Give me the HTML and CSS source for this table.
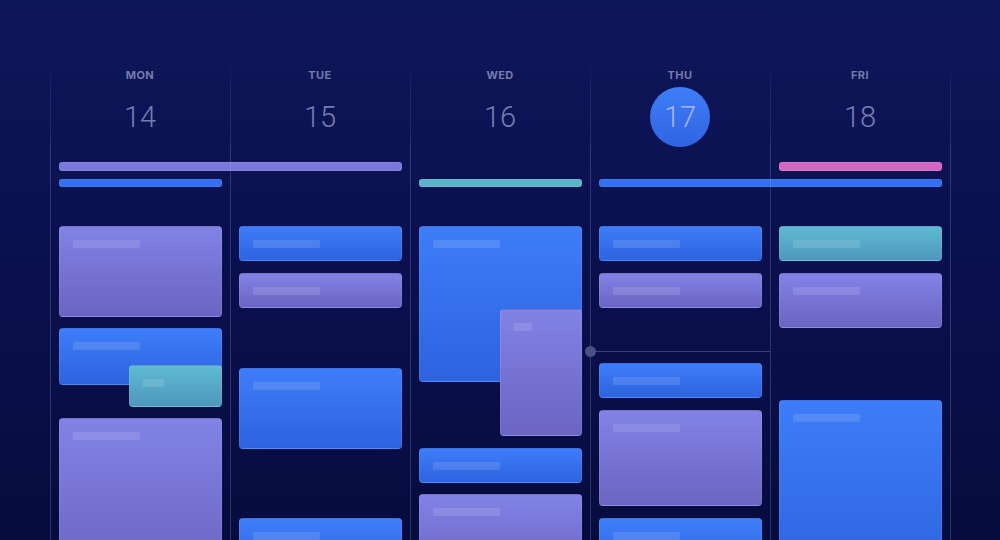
FILE: index.html
```html
<!DOCTYPE html>
<html>
<head>
<meta charset="utf-8">
<link rel="stylesheet" href="styles.css">
</head>
<body>
<div class="week">
  <div class="head"><div class="dow">MON</div><div class="date">14</div></div>
  <div class="head"><div class="dow">TUE</div><div class="date">15</div></div>
  <div class="head"><div class="dow">WED</div><div class="date">16</div></div>
  <div class="head"><div class="dow">THU</div><div class="date today">17</div></div>
  <div class="head"><div class="dow">FRI</div><div class="date">18</div></div>

  <div class="allday lane1 purple-bar" style="grid-column: 1 / span 2"></div>
  <div class="allday lane1 pink-bar" style="grid-column: 5 / span 1"></div>
  <div class="allday lane2 blue-bar" style="grid-column: 1 / span 1"></div>
  <div class="allday lane2 teal-bar" style="grid-column: 3 / span 1"></div>
  <div class="allday lane2 blue-bar" style="grid-column: 4 / span 2"></div>

  <div class="day">
    <div class="event purple" style="top:26px;height:91px"><span class="ph"></span></div>
    <div class="event blue" style="top:128px;height:57px"><span class="ph"></span></div>
    <div class="event teal narrow" style="top:165px;height:42px;left:79px"><span class="ph"></span></div>
    <div class="event purple" style="top:218px;height:160px"><span class="ph"></span></div>
  </div>
  <div class="day">
    <div class="event blue" style="top:26px;height:35px"><span class="ph"></span></div>
    <div class="event purple" style="top:73px;height:35px"><span class="ph"></span></div>
    <div class="event blue" style="top:168px;height:81px"><span class="ph"></span></div>
    <div class="event blue" style="top:318px;height:60px"><span class="ph"></span></div>
  </div>
  <div class="day">
    <div class="event blue" style="top:26px;height:156px"><span class="ph"></span></div>
    <div class="event purple narrow" style="top:109px;height:127px;left:90px"><span class="ph"></span></div>
    <div class="event blue" style="top:248px;height:35px"><span class="ph"></span></div>
    <div class="event purple" style="top:294px;height:80px"><span class="ph"></span></div>
  </div>
  <div class="day">
    <div class="event blue" style="top:26px;height:35px"><span class="ph"></span></div>
    <div class="event purple" style="top:73px;height:35px"><span class="ph"></span></div>
    <div class="now" style="top:151px"></div>
    <div class="event blue" style="top:163px;height:35px"><span class="ph"></span></div>
    <div class="event purple" style="top:210px;height:96px"><span class="ph"></span></div>
    <div class="event blue" style="top:318px;height:60px"><span class="ph"></span></div>
  </div>
  <div class="day">
    <div class="event teal" style="top:26px;height:35px"><span class="ph"></span></div>
    <div class="event purple" style="top:73px;height:55px"><span class="ph"></span></div>
    <div class="event blue" style="top:200px;height:180px"><span class="ph"></span></div>
  </div>
</div>
</body>
</html>
```

FILE: styles.css
```css
html, body {
  margin: 0;
  height: 540px;
  overflow: hidden;
}
body {
  background: linear-gradient(to bottom, #0f175b 0%, #0b1150 40%, #070c3e 100%);
  font-family: Inter, "Liberation Sans", sans-serif;
}
.week {
  position: relative;
  margin-left: 50px;
  width: 901px;
  height: 540px;
  overflow: hidden;
  display: grid;
  grid-template-columns: repeat(5, 180px);
  grid-template-rows: 147px 0 0 1fr;
}
.week::before {
  content: "";
  position: absolute;
  inset: 0;
  background: linear-gradient(to right, rgba(150,160,230,0.26) 1px, transparent 1px) 0 0 / 180px 100%;
  -webkit-mask-image: linear-gradient(to bottom, transparent 60px, rgba(0,0,0,0.45) 90px, rgba(0,0,0,0.6) 130px, #000 150px);
  mask-image: linear-gradient(to bottom, transparent 60px, rgba(0,0,0,0.45) 90px, rgba(0,0,0,0.6) 130px, #000 150px);
  pointer-events: none;
}
.head {
  grid-row: 1;
  display: flex;
  flex-direction: column;
  align-items: center;
  padding-top: 69px;
  box-sizing: border-box;
}
.dow {
  font-size: 11px;
  line-height: 12px;
  font-weight: 700;
  letter-spacing: 0.4px;
  color: #777cab;
}
.date {
  margin-top: 6px;
  width: 60px;
  height: 60px;
  border-radius: 50%;
  text-align: center;
  line-height: 60px;
  font-family: Roboto, "Liberation Sans", sans-serif;
  font-size: 29px;
  font-weight: 300;
  color: #777dae;
}
.date.today {
  background: linear-gradient(to bottom, #3f7ef8, #2f64e0);
  color: #aab3f3;
}
.allday {
  margin: 0 8px 0 9px;
  border-radius: 3px;
  box-shadow: inset 0 0 0 1px rgba(255,255,255,0.08);
}
.lane1 { grid-row: 2; margin-top: 15px; height: 9px; }
.lane2 { grid-row: 3; margin-top: 32px; height: 8px; }
.purple-bar { background: #7a78da; }
.pink-bar { background: #d466c2; }
.blue-bar { background: #3470ee; }
.teal-bar { background: #5cb3c9; }

.day {
  grid-row: 4;
  position: relative;
  margin-top: 53px;
}
.event {
  position: absolute;
  left: 9px;
  right: 8px;
  border-radius: 4px;
  box-sizing: border-box;
  border: 1px solid rgba(255,255,255,0.09);
  padding: 13px 13px;
}
.ph {
  display: block;
  width: 67px;
  height: 8px;
  border-radius: 1px;
  background: rgba(255,255,255,0.12);
}
.narrow .ph { width: 33%; }
.purple { background: linear-gradient(to bottom, #8282e6, #6b64c2); }
.blue { background: linear-gradient(to bottom, #3e7df8, #2d63df); }
.teal { background: linear-gradient(to bottom, #5dbbd2, #4f97bd); }
.now {
  position: absolute;
  left: 0;
  right: 0;
  height: 1px;
  background: rgba(160,165,210,0.35);
}
.now::before {
  content: "";
  position: absolute;
  left: -5px;
  top: -5px;
  width: 11px;
  height: 11px;
  border-radius: 50%;
  background: #4a5082;
}
```
